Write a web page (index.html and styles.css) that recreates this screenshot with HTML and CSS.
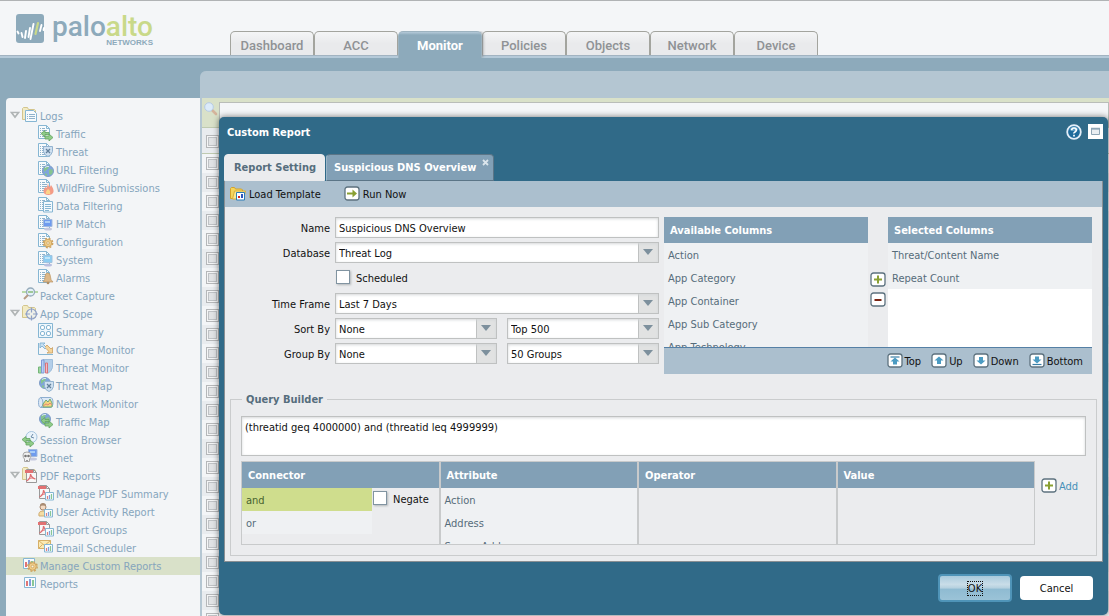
FILE: index.html
```html
<!DOCTYPE html>
<html lang="en">
<head>
<meta charset="utf-8">
<title>Custom Report</title>
<link rel="stylesheet" href="styles.css">
</head>
<body>
<svg class="defs" aria-hidden="true">
  <defs>
    <g id="sheet"><path d="M.5 .5h8l3 3v10h-11z" fill="#f7fbfd" stroke="#86b6d3"/><path d="M8.500 .5v3h3" fill="none" stroke="#86b6d3"/><path d="M2 3.500h1m1 0h3M2 5.500h1m1 0h5M2 7.500h1m1 0h5M2 9.500h1m1 0h5M2 11.500h1m1 0h5" stroke="#8fb2cb"/></g>
    <g id="folder"><path d="M.5 12.500v-11l1-1h4l1 2h6l1 1v9z" fill="#f2ebc4" stroke="#d3c58d"/></g>
    <g id="globe"><circle cx="6" cy="6" r="5.500" fill="#7fa5dc" stroke="#7f9dc6"/><path d="M2 3l3-2 2 1-1 2-2 1-1 2-1-1zM7 5l3-1 1 3-2 3-2-1zM3 8l2 1 0 2-2-1z" fill="#86c490"/><path d="M3 2.500q2-1.500 4-1" fill="none" stroke="#d5e6f7"/></g>
    <g id="arrows"><path d="M0 3.500l4-3v2h4v2h-4v2.500z" fill="#8fcc88" stroke="#64a362" stroke-width=".8"/><path d="M12 7.500l-4-3.500v2h-4v3h4v2z" fill="#8fcc88" stroke="#64a362" stroke-width=".8"/></g>
    <g id="shield"><path d="M.5 .5h9v5q-1 4-4.500 5q-3.500-1-4.500-5z" fill="#cfe0f0" stroke="#93b3d0"/><path d="M3 3l4 4M7 3l-4 4" stroke="#62809c" stroke-width="1.300"/></g>
    <g id="screen"><path d="M.5 .5h8.500v7h-8.500z" fill="#6f9bee" stroke="#a1b9df"/><path d="M2 2h5v2h-5z" fill="#a9cdf7"/><ellipse cx="5" cy="10" rx="4" ry="1.500" fill="#c5c9df"/></g>
    <g id="screen2"><path d="M.5 .5h8.500v7h-8.500z" fill="#8ccdf2" stroke="#a1c3df"/><path d="M2 2h5v2h-5z" fill="#bfe5fa"/><ellipse cx="5" cy="10" rx="4" ry="1.500" fill="#b9bfdf"/></g>
    <g id="gear"><circle cx="5" cy="5" r="4.700" fill="none" stroke="#cfa35d" stroke-width="1.400" stroke-dasharray="2 1.700"/><circle cx="5" cy="5" r="3.800" fill="#efcc87" stroke="#cfa35d"/><circle cx="5" cy="5" r="1.300" fill="#faf3df" stroke="#c99d57" stroke-width=".7"/></g>
    <g id="bars"><path d="M.5 .5h8v7.500h-8z" fill="#f8fbfe" stroke="#86b6d3"/><path d="M2.500 4v3" stroke="#e0807f" stroke-width="1.200"/><path d="M4.500 3v4" stroke="#7f9fdc" stroke-width="1.200"/><path d="M6.500 2v5" stroke="#89c795" stroke-width="1.200"/></g>
    <g id="pdf"><path d="M1.500 .5h7l3 3v10h-10z" fill="#f8f8f8" stroke="#999"/><path d="M8.500 .5v3h3" fill="none" stroke="#999"/><path d="M0 1h8v3h-8z" fill="#e27172"/><path d="M5.500 5q1 4 5 5M5.500 5q0 5-4 7M3 10q4-2 7 0" fill="none" stroke="#df6c70" stroke-width="1.200"/></g>
  </defs>
  <symbol id="i-logs" viewBox="0 0 16 16"><use href="#folder"/><path d="M3.500 3.500h8l3 3v8h-11z" fill="#f7fbfd" stroke="#86b6d3"/><path d="M5 7.500h1m1 0h6M5 9.500h1m1 0h6M5 11.500h1m1 0h6" stroke="#8fb2cb"/></symbol>
  <symbol id="i-traffic" viewBox="0 0 16 16"><use href="#sheet"/><use href="#arrows" x="3" y="5"/></symbol>
  <symbol id="i-threat" viewBox="0 0 16 16"><use href="#sheet"/><use href="#shield" x="5" y="3"/></symbol>
  <symbol id="i-url" viewBox="0 0 16 16"><use href="#sheet"/><use href="#globe" x="4" y="4"/></symbol>
  <symbol id="i-fire" viewBox="0 0 16 16"><use href="#sheet"/><path d="M10 4q0 3 2 4l1-2q3 4 2.500 7q-1 3-5 3q-5 0-5-4q0-2 2-4l1 1q1-2 1.500-5z" fill="#f39b86"/><path d="M10 10q3 2 2 5h-4q-1-2 2-5" fill="#fbd48a"/></symbol>
  <symbol id="i-data" viewBox="0 0 16 16"><use href="#sheet"/><path d="M5.500 4.500h9v10.500h-9z" fill="#f3f9fd" stroke="#86b6d3"/><path d="M7 7.500h6M7 9.500h6M7 11.500h6M7 13.500h4" stroke="#86b6d3"/></symbol>
  <symbol id="i-hip" viewBox="0 0 16 16"><use href="#sheet"/><use href="#screen" x="5" y="4"/></symbol>
  <symbol id="i-system" viewBox="0 0 16 16"><use href="#sheet"/><use href="#screen2" x="5" y="4"/></symbol>
  <symbol id="i-config" viewBox="0 0 16 16"><use href="#sheet"/><use href="#gear" x="5" y="5"/></symbol>
  <symbol id="i-alarm" viewBox="0 0 16 16"><use href="#sheet"/><path d="M9.500 4q3 0 3 4 0 3 2.500 5h-10q2-2 2-5 0-4 2.500-4z" fill="#dcb889" stroke="#bd9764" stroke-width=".7"/><circle cx="10" cy="14" r="1.300" fill="#ae8d65"/></symbol>
  <symbol id="i-packet" viewBox="0 0 16 16"><path d="M0 5h16" stroke="#a5cf8c" stroke-width="1.500"/><circle cx="8.500" cy="5" r="4" fill="#e5f1f9" stroke="#96abbb" stroke-width="1.300"/><path d="M6 5h5" stroke="#86ba79" stroke-width="1.500"/><path d="M6 8l-4 4" stroke="#b69a83" stroke-width="2"/></symbol>
  <symbol id="i-scope" viewBox="0 0 16 16"><use href="#folder"/><circle cx="9.500" cy="9" r="5" fill="#eef2fa" fill-opacity=".7" stroke="#8fa1c7" stroke-width="1.200"/><path d="M9.500 2.500v5m0 3v5M3 9h5m3 0h5" stroke="#8fa1c7" stroke-width="1.200"/></symbol>
  <symbol id="i-summary" viewBox="0 0 16 16"><path d="M.5 .5h14v14h-14z" fill="#eff7fc" stroke="#86b6d3"/><g fill="#fff" stroke="#86b6d3"><rect x="2.500" y="2.500" width="4" height="4" rx="1.500"/><rect x="8.500" y="2.500" width="4" height="4" rx="1.500"/><rect x="2.500" y="8.500" width="4" height="4" rx="1.500"/><rect x="8.500" y="8.500" width="4" height="4" rx="1.500"/></g></symbol>
  <symbol id="i-change" viewBox="0 0 16 16"><path d="M.5 2v11.500h14.500" fill="none" stroke="#86b6d3"/><path d="M2 2h5l-1.500 1.500 3 3-1.500 1.500-3-3-2 2z" fill="#c6dff1" stroke="#75a9cf" stroke-width=".8"/><path d="M7 6l2-2 4 4 1.500-1.500v5.500h-5.500l2-1.500-3-3" fill="#f4d49a" stroke="#c99e5f" stroke-width=".8"/></symbol>
  <symbol id="i-tmon" viewBox="0 0 16 16"><path d="M5 .5h9.500v8q-1 4-5 6z" fill="#b3cee9" stroke="#9fbedb"/><path d="M.5 8h3v6h-3z" fill="#9fd6a2" stroke="#75b679"/><path d="M3.500 1h2.500v13h-2.500z" fill="#b6cff5" stroke="#7e9bd7"/><path d="M7.500 4h2v10h-2z" fill="#f5bcc0" stroke="#d7747d"/></symbol>
  <symbol id="i-tmap" viewBox="0 0 16 16"><use href="#globe" x="1"/><use href="#shield" x="6" y="4"/></symbol>
  <symbol id="i-nmon" viewBox="0 0 16 16"><path d="M3 2.500h9q3 0 3 5t-3 5h-9q-2.500 0-2.500-5t2.500-5z" fill="#dbe8f6" stroke="#8daed0"/><path d="M3 3q2 1 2 5t-2 4" fill="none" stroke="#8daed0"/><path d="M5 9l3-4 2 2 2-3 2 4v4h-9z" fill="#f3d57f" stroke="#6faa75"/><path d="M5 11l3-2 2 1 2-2 2 2" fill="none" stroke="#e48a76"/></symbol>
  <symbol id="i-trmap" viewBox="0 0 16 16"><use href="#globe" x="1"/><use href="#arrows" x="3" y="4"/></symbol>
  <symbol id="i-session" viewBox="0 0 16 16"><circle cx="9.500" cy="6" r="5.500" fill="#e9f3fb" stroke="#a6c5de"/><path d="M11 3l-2 3 3 1" fill="none" stroke="#6c8ca8"/><use href="#arrows" x="0" y="5"/></symbol>
  <symbol id="i-botnet" viewBox="0 0 16 16"><use href="#screen" x="6" y="0"/><path d="M1 6q0-3 4-3t4 3q0 3-1.500 4v2.500h-5v-2.500q-1.500-1-1.500-4z" fill="#f2f2f2" stroke="#a6a6a6"/><circle cx="3.500" cy="7" r="1.300" fill="#777"/><circle cx="6.500" cy="7" r="1.300" fill="#777"/><path d="M4 11.500h2" stroke="#999"/></symbol>
  <symbol id="i-pdf" viewBox="0 0 16 16"><use href="#folder"/><use href="#pdf" x="3" y="2"/></symbol>
  <symbol id="i-mpdf" viewBox="0 0 16 16"><use href="#pdf"/><use href="#bars" x="7" y="7"/></symbol>
  <symbol id="i-user" viewBox="0 0 16 16"><path d="M1 13q-1-5 4-5t5 5z" fill="#f4dca3" stroke="#cfac72"/><circle cx="5" cy="4" r="3" fill="#f4dbc4" stroke="#a58870"/><path d="M2 3q0-3 3-3t3 3q-3-1-6 0" fill="#a88b72"/><use href="#bars" x="6" y="6"/></symbol>
  <symbol id="i-mail" viewBox="0 0 16 16"><path d="M.5 1.500h12v8h-12z" fill="#fbeab2" stroke="#d6af67"/><path d="M.5 1.500l6 5 6-5M.5 9.500l4-4m8 4l-4-4" fill="none" stroke="#d6af67"/><use href="#bars" x="6" y="5"/></symbol>
  <symbol id="i-custom" viewBox="0 0 16 16"><path d="M1.500 1.500h11v10h-11z" fill="#f8fbfe" stroke="#86b6d3"/><path d="M4 5v5" stroke="#e07574" stroke-width="2"/><path d="M7 3v7" stroke="#7f9fdc" stroke-width="2"/><path d="M10 4v5" stroke="#89c795" stroke-width="2"/><use href="#gear" x="5.500" y="4.500"/></symbol>
  <symbol id="i-reports" viewBox="0 0 16 16"><path d="M2.500 2.500h11v10h-11z" fill="#f8fbfe" stroke="#86b6d3"/><path d="M5 6v5" stroke="#e07574" stroke-width="2"/><path d="M8 4v7" stroke="#7f9fdc" stroke-width="2"/><path d="M11 5v6" stroke="#89c795" stroke-width="2"/></symbol>
  <symbol id="i-plus" viewBox="0 0 16 16"><rect x="1" y="1" width="14" height="13" rx="2.500" fill="#fff" stroke="#5d727f" stroke-width="1.300"/><path d="M8 3.500v8M4 7.500h8" stroke="#8aa032" stroke-width="2"/></symbol>
  <symbol id="i-minus" viewBox="0 0 16 16"><rect x="1" y="1" width="14" height="13" rx="2.500" fill="#fff" stroke="#5d727f" stroke-width="1.300"/><path d="M4.500 8h7" stroke="#7b2412" stroke-width="2"/></symbol>
  <symbol id="i-frame" viewBox="0 0 16 16"><rect x="1" y="1" width="14" height="13" rx="2.500" fill="#fff" stroke="#5d727f" stroke-width="1.300"/></symbol>
  <symbol id="i-twist" viewBox="0 0 10 8"><path d="M1.500 1.500h7l-3.500 4.500z" fill="#fff" stroke="#b0b5b6" stroke-width="1.700"/></symbol>
</svg>

<header class="top">
  <a class="logo" href="#" aria-label="Palo Alto Networks">
    <svg width="30" height="29" viewBox="0 0 30 29"><rect width="28" height="29" rx="3" fill="#8daabb"/><path d="M1.500 17.500l1 2M5.500 19l1 4M10 17l-1 7M14 14l-1.500 9M17.500 10l-3 15" stroke="#fff" stroke-width="1.900" stroke-linecap="round"/><path d="M22 9l-2.500 11" stroke="#c9d989" stroke-width="2.200" stroke-linecap="round"/><path d="M25.500 11l-1.500 6M28 14l-.5 2" stroke="#fff" stroke-width="1.900" stroke-linecap="round"/></svg>
    <span class="mark"><span class="word">palo<b>alto</b></span><small>NETWORKS</small></span>
  </a>
  <nav class="tabs">
    <a href="#">Dashboard</a><a href="#">ACC</a><a href="#" class="on">Monitor</a><a href="#">Policies</a><a href="#">Objects</a><a href="#">Network</a><a href="#">Device</a>
  </nav>
</header>

<div class="work">
  <nav class="side">
    <ul>
      <li><a href="#"><svg class="tw"><use href="#i-twist"/></svg><svg class="ic"><use href="#i-logs"/></svg>Logs</a></li>
      <li class="sub"><a href="#"><svg class="ic"><use href="#i-traffic"/></svg>Traffic</a></li>
      <li class="sub"><a href="#"><svg class="ic"><use href="#i-threat"/></svg>Threat</a></li>
      <li class="sub"><a href="#"><svg class="ic"><use href="#i-url"/></svg>URL Filtering</a></li>
      <li class="sub"><a href="#"><svg class="ic"><use href="#i-fire"/></svg>WildFire Submissions</a></li>
      <li class="sub"><a href="#"><svg class="ic"><use href="#i-data"/></svg>Data Filtering</a></li>
      <li class="sub"><a href="#"><svg class="ic"><use href="#i-hip"/></svg>HIP Match</a></li>
      <li class="sub"><a href="#"><svg class="ic"><use href="#i-config"/></svg>Configuration</a></li>
      <li class="sub"><a href="#"><svg class="ic"><use href="#i-system"/></svg>System</a></li>
      <li class="sub"><a href="#"><svg class="ic"><use href="#i-alarm"/></svg>Alarms</a></li>
      <li class="leaf"><a href="#"><svg class="ic"><use href="#i-packet"/></svg>Packet Capture</a></li>
      <li><a href="#"><svg class="tw"><use href="#i-twist"/></svg><svg class="ic"><use href="#i-scope"/></svg>App Scope</a></li>
      <li class="sub"><a href="#"><svg class="ic"><use href="#i-summary"/></svg>Summary</a></li>
      <li class="sub"><a href="#"><svg class="ic"><use href="#i-change"/></svg>Change Monitor</a></li>
      <li class="sub"><a href="#"><svg class="ic"><use href="#i-tmon"/></svg>Threat Monitor</a></li>
      <li class="sub"><a href="#"><svg class="ic"><use href="#i-tmap"/></svg>Threat Map</a></li>
      <li class="sub"><a href="#"><svg class="ic"><use href="#i-nmon"/></svg>Network Monitor</a></li>
      <li class="sub"><a href="#"><svg class="ic"><use href="#i-trmap"/></svg>Traffic Map</a></li>
      <li class="leaf"><a href="#"><svg class="ic"><use href="#i-session"/></svg>Session Browser</a></li>
      <li class="leaf"><a href="#"><svg class="ic"><use href="#i-botnet"/></svg>Botnet</a></li>
      <li><a href="#"><svg class="tw"><use href="#i-twist"/></svg><svg class="ic"><use href="#i-pdf"/></svg>PDF Reports</a></li>
      <li class="sub"><a href="#"><svg class="ic"><use href="#i-mpdf"/></svg>Manage PDF Summary</a></li>
      <li class="sub"><a href="#"><svg class="ic"><use href="#i-user"/></svg>User Activity Report</a></li>
      <li class="sub"><a href="#"><svg class="ic"><use href="#i-mpdf"/></svg>Report Groups</a></li>
      <li class="sub"><a href="#"><svg class="ic"><use href="#i-mail"/></svg>Email Scheduler</a></li>
      <li class="leaf cur"><a href="#"><svg class="ic"><use href="#i-custom"/></svg>Manage Custom Reports</a></li>
      <li class="leaf"><a href="#"><svg class="ic"><use href="#i-reports"/></svg>Reports</a></li>
    </ul>
  </nav>
  <main class="pane">
    <div class="filter">
      <svg width="14" height="14" viewBox="0 0 14 14"><path d="M8 8l4 4" stroke="#d4b49c" stroke-width="2.600" stroke-linecap="round"/><circle cx="5" cy="5" r="4.300" fill="#dcebfa" stroke="#b6cbe4"/></svg>
      <input type="text" aria-label="Filter">
    </div>
    <div class="rows">
      <div class="hd"><input type="checkbox" aria-label="Select all"></div>
      <div><input type="checkbox" aria-label="Row 1"></div><div><input type="checkbox" aria-label="Row 2"></div><div><input type="checkbox" aria-label="Row 3"></div><div><input type="checkbox" aria-label="Row 4"></div><div><input type="checkbox" aria-label="Row 5"></div><div><input type="checkbox" aria-label="Row 6"></div><div><input type="checkbox" aria-label="Row 7"></div><div><input type="checkbox" aria-label="Row 8"></div><div><input type="checkbox" aria-label="Row 9"></div><div><input type="checkbox" aria-label="Row 10"></div><div><input type="checkbox" aria-label="Row 11"></div><div><input type="checkbox" aria-label="Row 12"></div><div><input type="checkbox" aria-label="Row 13"></div><div><input type="checkbox" aria-label="Row 14"></div><div><input type="checkbox" aria-label="Row 15"></div><div><input type="checkbox" aria-label="Row 16"></div><div><input type="checkbox" aria-label="Row 17"></div><div><input type="checkbox" aria-label="Row 18"></div><div><input type="checkbox" aria-label="Row 19"></div><div><input type="checkbox" aria-label="Row 20"></div><div><input type="checkbox" aria-label="Row 21"></div><div><input type="checkbox" aria-label="Row 22"></div><div><input type="checkbox" aria-label="Row 23"></div><div><input type="checkbox" aria-label="Row 24"></div><div><input type="checkbox" aria-label="Row 25"></div>
    </div>
  </main>
</div>

<section class="dialog" role="dialog" aria-labelledby="dlg-title">
  <div class="title">
    <h1 id="dlg-title">Custom Report</h1>
    <button type="button" aria-label="Help"><svg width="16" height="16" viewBox="0 0 16 16"><circle cx="8" cy="8" r="6.800" fill="#1f6b9c" stroke="#e4eef8" stroke-width="1.800"/><path d="M3.500 6q1-3.500 4.500-3.500t4.500 3.500q-4.500 2-9 0z" fill="#5fa0c6"/><path d="M5.700 6.300q0-2.300 2.300-2.300t2.300 2q0 1.200-1.300 1.900t-1 1.600M8 10.800v1.600" fill="none" stroke="#fff" stroke-width="1.700"/></svg></button>
    <button type="button" aria-label="Maximize"><svg width="15" height="15" viewBox="0 0 15 15"><path d="M0 0h15v15h-15z" fill="#fff"/><path d="M3.500 5h8v5.500h-8z" fill="#e9eef2" stroke="#8fa6b6"/><path d="M3 4.500h9" stroke="#8fa6b6" stroke-width="1.500"/></svg></button>
  </div>
  <div class="dtabs">
    <button type="button" class="on">Report Setting</button>
    <button type="button">Suspicious DNS Overview<svg width="7" height="7" viewBox="0 0 7 7"><path d="M1 1l5 5M6 1l-5 5" stroke="#dbe5ec" stroke-width="1.800"/></svg></button>
  </div>
  <div class="body">
    <div class="tools">
      <button type="button"><svg width="16" height="16" viewBox="0 0 16 16"><path d="M.5 12.500v-10l1-1h3l1 1.500h6l1 1v8.500z" fill="#f4d55c" stroke="#d3a22b"/><path d="M2.500 13l2-8h11l-2 8z" fill="#fae98f" stroke="#d9ad3a"/><path d="M6.500 6.500h8v7.500h-8z" fill="#fff" stroke="#2b7db7"/><path d="M8 10h2v2h-2z" fill="#d8261c"/><path d="M11 8h2v4h-2z" fill="#2c56bd"/></svg>Load Template</button>
      <button type="button"><svg class="ic" viewBox="0 0 16 16"><use href="#i-frame"/><path d="M3 7.500h7" stroke="#8aa032" stroke-width="2"/><path d="M8.500 3.500l4.500 4-4.500 4z" fill="#8aa032"/></svg>Run Now</button>
    </div>
    <div class="upper">
      <form class="form">
        <label for="name">Name</label><input id="name" class="field" type="text" value="Suspicious DNS Overview">
        <label for="db">Database</label><select id="db" class="field"><option>Threat Log</option></select>
        <span></span><label class="chk"><input type="checkbox">Scheduled</label>
        <label for="tf">Time Frame</label><select id="tf" class="field"><option>Last 7 Days</option></select>
        <label for="sort">Sort By</label><div class="pair"><select id="sort" class="field"><option>None</option></select><select class="field" aria-label="Sort limit"><option>Top 500</option></select></div>
        <label for="grp">Group By</label><div class="pair"><select id="grp" class="field"><option>None</option></select><select class="field" aria-label="Group limit"><option>50 Groups</option></select></div>
      </form>
      <div class="picker">
        <div class="lists">
          <div class="list"><h2>Available Columns</h2><ul><li>Action</li><li>App Category</li><li>App Container</li><li>App Sub Category</li><li>App Technology</li></ul></div>
          <div class="move">
            <button type="button" aria-label="Add column"><svg class="ic"><use href="#i-plus"/></svg></button>
            <button type="button" aria-label="Remove column"><svg class="ic"><use href="#i-minus"/></svg></button>
          </div>
          <div class="list white"><h2>Selected Columns</h2><ul><li>Threat/Content Name</li><li>Repeat Count</li></ul></div>
        </div>
        <div class="order">
          <button type="button"><svg class="ic" viewBox="0 0 16 16"><use href="#i-frame"/><path d="M3.500 4h9" stroke="#3b7fa6" stroke-width="1.200"/><path d="M8 4.500l4.500 4h-2.500v3h-4v-3h-2.500z" fill="#4b9bc2"/></svg>Top</button>
          <button type="button"><svg class="ic" viewBox="0 0 16 16"><use href="#i-frame"/><path d="M8 3.500l4.500 4h-2.500v3.500h-4v-3.500h-2.500z" fill="#4b9bc2"/></svg>Up</button>
          <button type="button"><svg class="ic" viewBox="0 0 16 16"><use href="#i-frame"/><path d="M8 11.500l4.500-4h-2.500v-3.500h-4v3.500h-2.500z" fill="#4b9bc2"/></svg>Down</button>
          <button type="button"><svg class="ic" viewBox="0 0 16 16"><use href="#i-frame"/><path d="M3.500 11.500h9" stroke="#3b7fa6" stroke-width="1.200"/><path d="M8 10.500l4.500-4h-2.500v-3h-4v3h-2.500z" fill="#4b9bc2"/></svg>Bottom</button>
        </div>
      </div>
    </div>
    <fieldset class="query">
      <legend>Query Builder</legend>
      <textarea aria-label="Query">(threatid geq 4000000) and (threatid leq 4999999)</textarea>
      <div class="build">
        <div class="cols">
          <div class="col"><h2>Connector</h2><div class="conn"><ul><li class="sel">and</li><li>or</li></ul><label class="chk"><input type="checkbox">Negate</label></div></div>
          <div class="col"><h2>Attribute</h2><ul><li>Action</li><li>Address</li><li>Source Address</li></ul></div>
          <div class="col"><h2>Operator</h2></div>
          <div class="col"><h2>Value</h2></div>
        </div>
        <a class="add" href="#"><svg class="ic"><use href="#i-plus"/></svg>Add</a>
      </div>
    </fieldset>
  </div>
  <div class="foot">
    <button type="button" class="ok"><span>OK</span></button>
    <button type="button" class="cancel">Cancel</button>
  </div>
</section>
</body>
</html>
```
FILE: styles.css
```css
* { box-sizing: border-box; }
html, body { height: 100%; }
body {
  margin: 0;
  display: flex;
  flex-direction: column;
  overflow: hidden;
  background: #8daabb;
  font: 11px/16px "DejaVu Sans Condensed", "Noto Sans", sans-serif;
  color: #111;
}
.defs { position: absolute; width: 0; height: 0; }
button, input, select, textarea { font: inherit; color: inherit; margin: 0; }
button { border: 0; padding: 0; background: none; display: flex; align-items: center; }
ul { list-style: none; margin: 0; padding: 0; }
a { text-decoration: none; color: inherit; }
h1, h2 { margin: 0; font-size: 11px; font-weight: bold; color: #fff; }
svg { flex: none; display: block; }
.ic { width: 16px; height: 16px; }

/* Top bar */
.top {
  flex: none;
  height: 56px;
  display: flex;
  align-items: flex-end;
  background: #f4f6f8;
  border-top: 1px solid #b0b3b5;
  border-bottom: 1px solid #a2b3c1;
  box-shadow: 0 2px #b5cad9;
}
.logo { width: 230px; height: 54px; padding: 13px 0 0 16px; display: flex; gap: 6px; }
.mark { display: flex; flex-direction: column; align-items: flex-end; color: #8daabb; }
.word { font: 500 28px/25px Roboto, sans-serif; }
.word b { font-weight: 500; color: #c9d989; }
.mark small { font: bold 8px/8px "Liberation Sans", sans-serif; }
.tabs { display: flex; }
.tabs a {
  width: 84px;
  height: 24px;
  border: 1px solid #a3a49e;
  border-bottom: 0;
  border-radius: 5px 5px 0 0;
  background: linear-gradient(#f4f5f6, #e9eaec 50%);
  color: #8f9295;
  font: 500 13px/27px Roboto, sans-serif;
  text-align: center;
}
.tabs .on {
  position: relative;
  height: 27px;
  margin-bottom: -3px;
  border-color: #9db3c0;
  background: linear-gradient(#b5cad9, #8daabb 3px);
  color: #fff;
  font-weight: bold;
  box-shadow: 2px 0 3px -1px #8a8f92;
  clip-path: inset(0 -4px 0 0);
}

/* Workspace */
.work { flex: 1; min-height: 0; display: flex; padding-top: 15px; }
.side {
  width: 194px;
  margin: 27px 0 0 6px;
  padding-top: 9px;
  background: #f3f5f7;
  border-radius: 4px 0 0 0;
  color: #86a5bd;
  overflow: hidden;
}
.side a { display: flex; align-items: flex-start; height: 18px; padding-left: 4px; gap: 2px; line-height: 20px; white-space: nowrap; }
.side .tw { width: 10px; height: 8px; margin-top: 4px; }
.side .leaf a { padding-left: 16px; }
.side .sub a { padding-left: 32px; }
.side .cur { background: #d9e1c9; }
.pane {
  flex: 1;
  padding-top: 27px;
  border-left: 2px solid #b4c6d2;
  border-radius: 6px 0 0 0;
  background: #b4c6d2;
  overflow: hidden;
}
.filter { display: flex; height: 29px; padding: 4px 0 0 2px; gap: 1px; background: #d9e1c9; }
.filter input { flex: 1; height: 25px; border: 1px solid #b9bdb9; background: #f4f6f8; }
.rows div { height: 19px; padding: 3px 4px; background: #f3f5f7; }
.rows div:nth-child(odd) { background: #e9ecef; }
.rows .hd { height: 27px; padding-top: 7px; background: #d9e1c9; border: 1px solid #bfcab0; border-width: 1px 0; }
.rows input {
  appearance: none;
  display: block;
  width: 13px;
  height: 13px;
  border: 1px solid #b5b7b9;
  background: #e1e3e5;
  box-shadow: inset 0 0 0 1px #f4f5f6, inset 0 0 0 2px #bfc2c5;
}

/* Dialog */
.dialog {
  position: absolute;
  left: 219px;
  right: 1px;
  top: 117px;
  padding: 0 5px 13px;
  border-radius: 5px;
  background: #306a88;
  box-shadow: 0 0 6px rgba(0, 0, 0, .55);
}
.title { display: flex; align-items: center; gap: 6px; height: 37px; padding: 0 0 8px 3px; }
.title h1 { flex: 1; padding-top: 2px; }
.dtabs { display: flex; gap: 1px; }
.dtabs button {
  height: 27px;
  padding: 1px 17px 0 7px;
  border: 1px solid #5b7587;
  border-left-color: #9db6c7;
  border-radius: 4px 4px 0 0;
  background: #82a0b6;
  color: #fff;
  font-weight: bold;
  position: relative;
}
.dtabs .on { padding: 1px 8px 0 9px; border-color: #ebecee; background: #ebecee; color: #566e7d; }
.dtabs svg { position: absolute; right: 4px; top: 4px; }
.body { background: #ebecee; border: 1px solid #898f93; border-top: 0; padding-bottom: 5px; }
.tools { display: flex; gap: 23px; height: 26px; padding: 5px 0 0 5px; background: #abbfce; }
.tools button, .order button { align-items: flex-start; gap: 3px; height: 18px; line-height: 18px; }
.upper { display: flex; gap: 5px; padding: 10px 10px 0 5px; }
.form { flex: 1; display: grid; grid-template-columns: 101px 1fr; gap: 4px; align-content: start; align-items: center; }
.form > label:not(.chk) { text-align: right; padding: 2px 1px 0 0; }
.field {
  width: 100%;
  min-width: 0;
  height: 21px;
  padding: 2px 3px 0;
  border: 1px solid #bfc1c1;
  border-radius: 0;
  background-color: #fff;
  box-shadow: inset 0 1px 3px #d5d7d9;
}
select.field {
  appearance: none;
  background-image: url("data:image/svg+xml,%3Csvg xmlns='http://www.w3.org/2000/svg' width='20' height='21'%3E%3Cpath d='M0 0h20v21H0z' fill='%23e1e2e2'/%3E%3Cpath d='M.5 0v21' stroke='%23bfc1c1'/%3E%3Cpath d='M5 6h10l-5 6z' fill='%237d909d'/%3E%3C/svg%3E");
  background-repeat: no-repeat;
  background-position: right top;
}
.pair { display: grid; grid-template-columns: 162px 1fr; gap: 10px; }
.chk { display: flex; align-items: flex-start; gap: 6px; height: 22px; padding: 3px 0 0 1px; line-height: 18px; }
.chk input {
  appearance: none;
  width: 14px;
  height: 14px;
  border: 1px solid #8194a1;
  background: #fff;
  box-shadow: 1px 1px 2px #b2b6b9;
}
.picker { width: 428px; }
.lists { display: flex; height: 130px; }
.list { flex: 1; background: #eff1f3; overflow: hidden; }
.white { background: #fff; }
.list h2, .col h2 { height: 26px; padding-left: 6px; line-height: 28px; background: #82a0b6; }
.list li, .col li { height: 23px; padding-left: 4px; line-height: 25px; background: #eff1f3; color: #566c7a; }
.move { width: 20px; padding: 55px 2px 0; display: flex; flex-direction: column; gap: 4px; }
.order {
  height: 27px;
  padding: 5px 9px 0 0;
  display: flex;
  justify-content: flex-end;
  gap: 10px;
  border-top: 1px solid #5580a5;
  background: #abbfce;
}
.order button { gap: 2px; }
.query { margin: 16px 5px 0 5px; padding: 8px 10px 10px; border: 1px solid #cacccd; min-width: 0; }
.query legend { margin-left: 1px; padding: 2px 4px 0; color: #566e7d; font-weight: bold; }
.query textarea {
  display: block;
  width: 100%;
  height: 40px;
  padding: 3px 3px 0;
  border: 1px solid #bfc1c1;
  resize: none;
  background: #fff;
  box-shadow: inset 0 1px 3px #d5d7d9;
}
.build { display: flex; gap: 6px; padding-top: 5px; }
.cols { flex: 1; display: grid; grid-template-columns: repeat(4, 1fr); gap: 2px; height: 84px; border: 1px solid #c8cacb; background: #c8cacb; }
.col { height: 82px; background: #ebecee; overflow: hidden; }
.conn { display: flex; gap: 1px; }
.conn ul { width: 130px; }
.conn .chk { padding-left: 0; }
.col .sel { background: #cfdd8d; color: #47622e; }
.add { display: flex; width: 45px; padding-top: 17px; align-items: flex-start; gap: 2px; line-height: 18px; color: #4690b8; }
.foot { display: flex; justify-content: flex-end; align-items: center; gap: 8px; padding: 12px 10px 0 0; }
.foot button { justify-content: center; border-radius: 4px; }
.ok {
  width: 74px;
  height: 28px;
  border: 2px solid #4f94b8;
  background: linear-gradient(#a9cadc, #c9dde8 35%, #b5d0df 50%, #8fbbd2 55%, #9bc3d7);
}
.ok span { border: 1px dotted #111; line-height: 13px; }
.foot .cancel { width: 73px; height: 24px; padding-top: 2px; background: #fff; }
```
